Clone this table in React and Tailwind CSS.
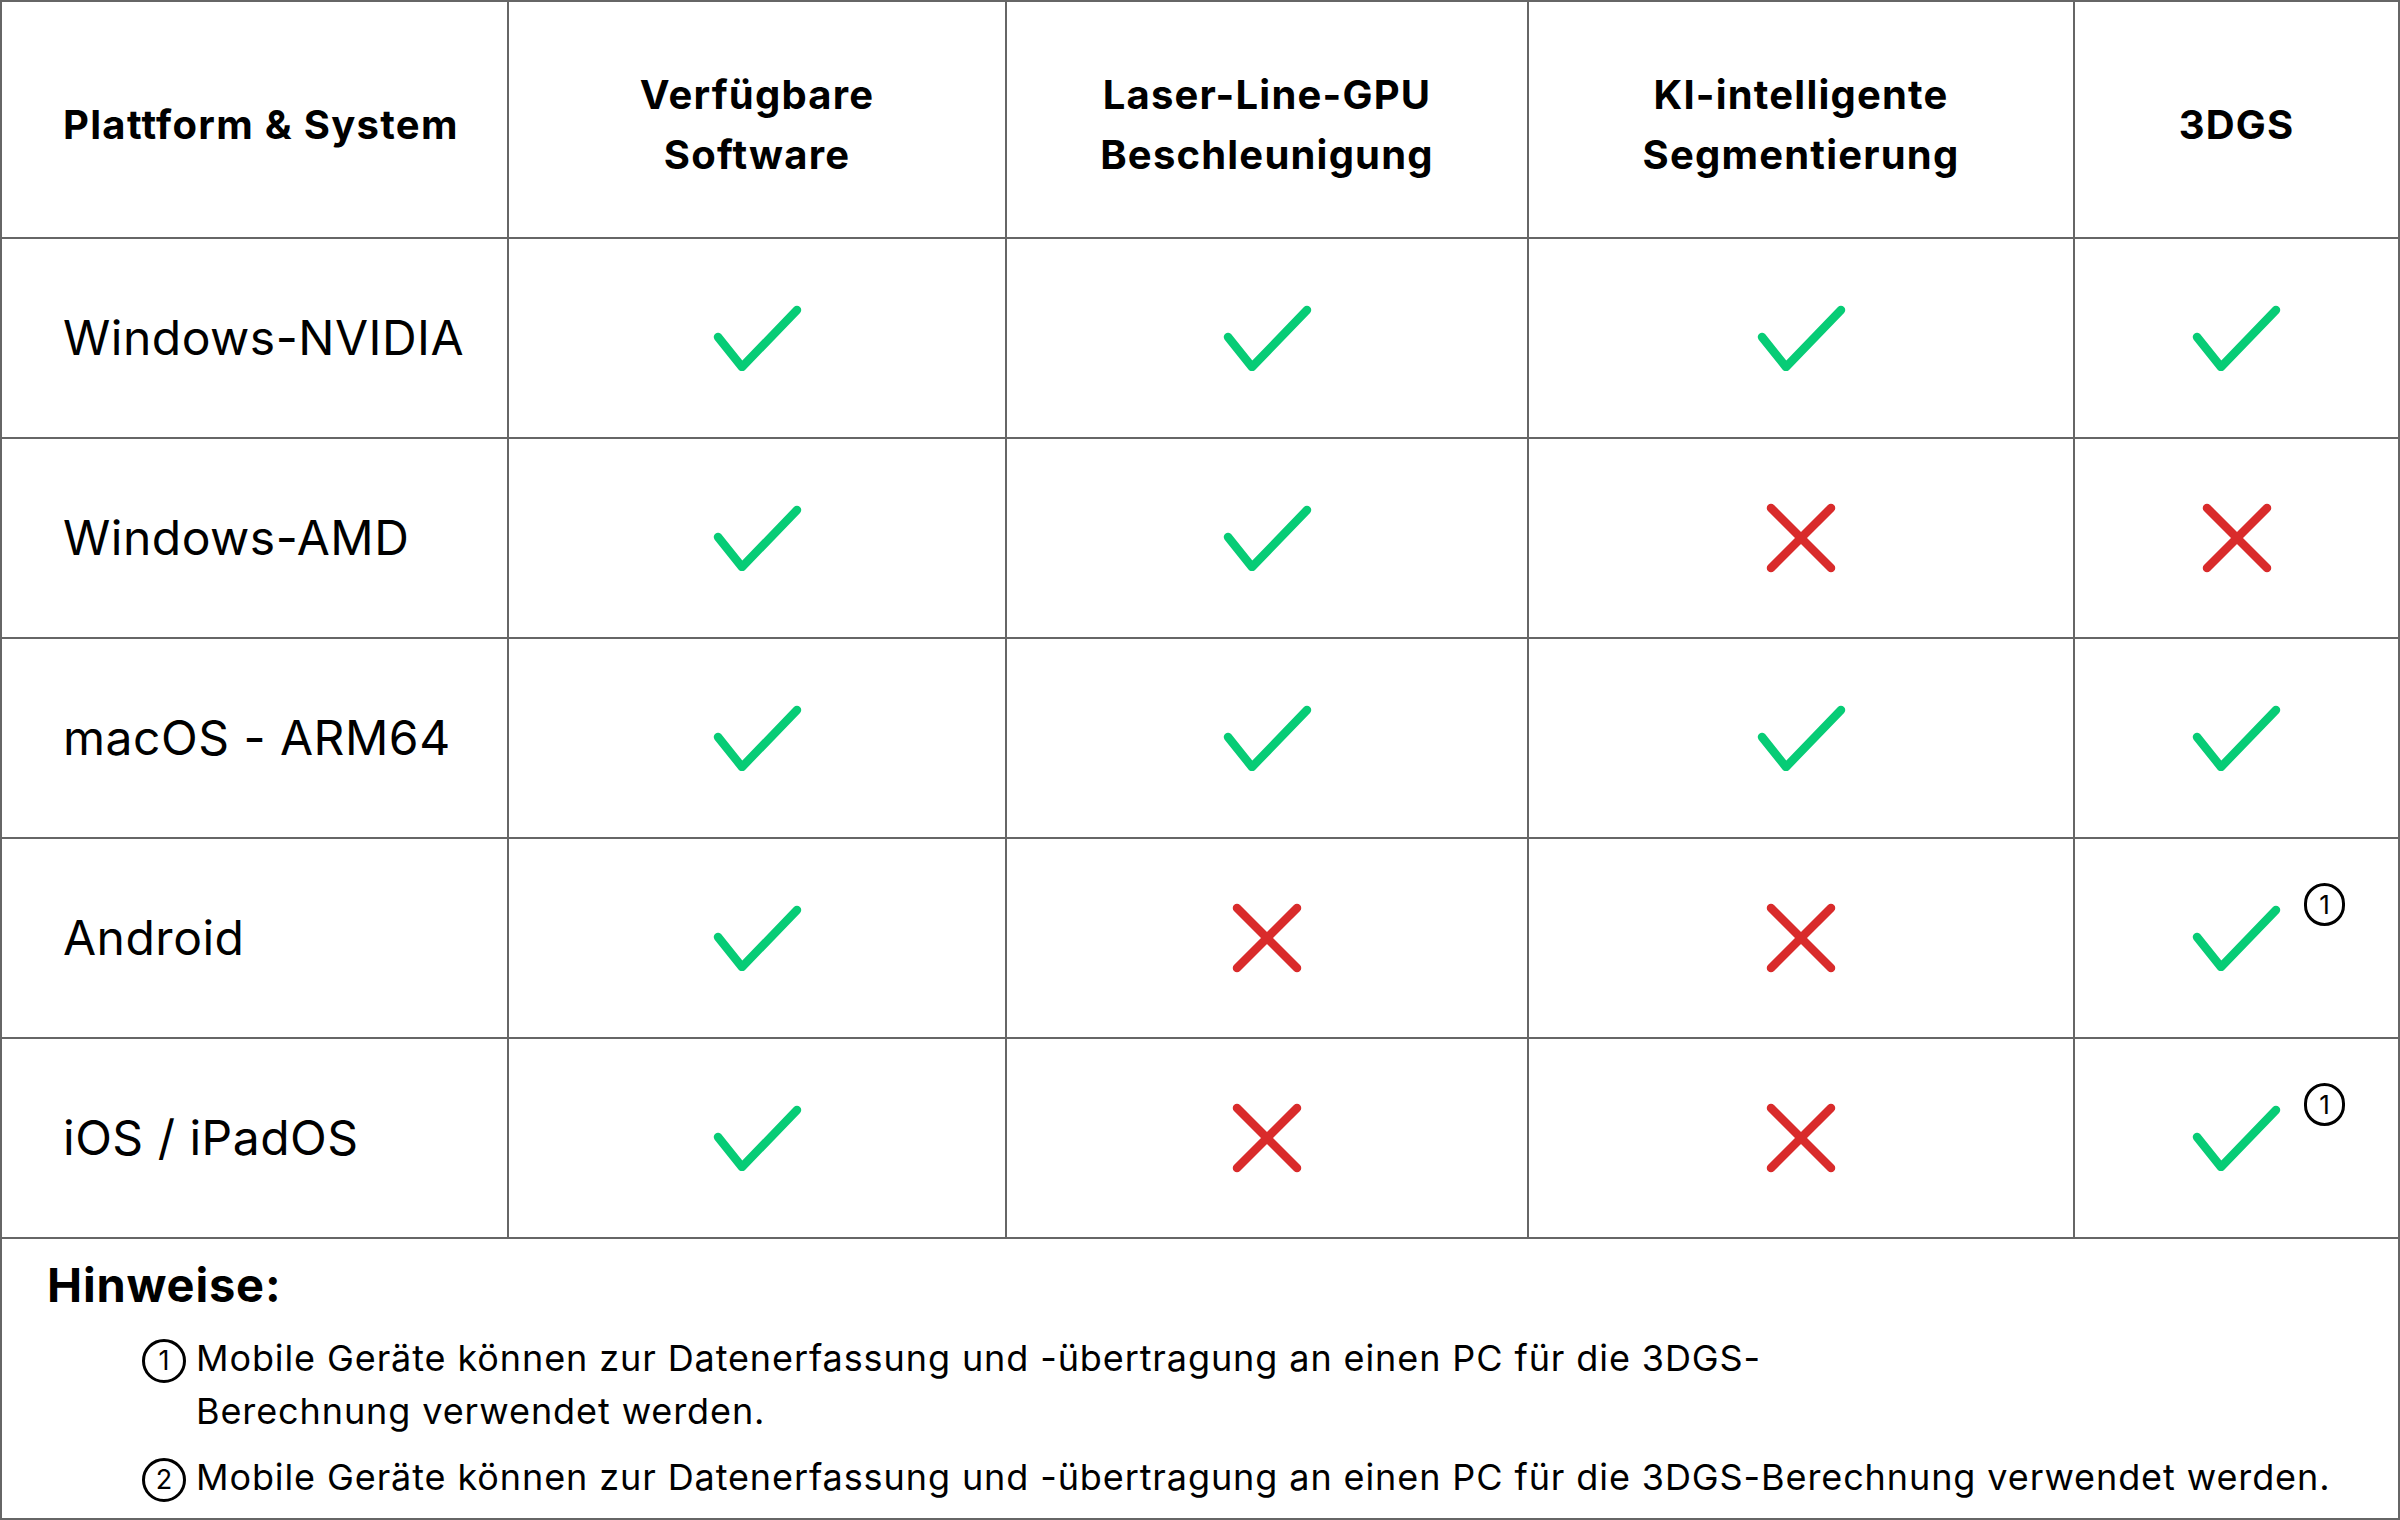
import React from "react";

const Check = ({ badge }) => (
  <div className="relative w-[89px] h-[66px]">
    <svg width="89" height="66" viewBox="0 0 89 66" fill="none">
      <path d="M5 32 L29 62 L84 5" stroke="#07cc76" strokeWidth="8.5" strokeLinecap="round" strokeLinejoin="round" />
    </svg>
    {badge && (
      <span className="absolute left-[112px] top-[-22px] w-[41px] h-[43px] rounded-full border-[3px] border-black flex items-center justify-center text-[26px] leading-none text-black">
        1
      </span>
    )}
  </div>
);

const Cross = () => (
  <svg width="70" height="70" viewBox="0 0 70 70" fill="none">
    <path d="M5 5 L65 65 M65 5 L5 65" stroke="#d92b2b" strokeWidth="8.5" strokeLinecap="round" />
  </svg>
);

const rows = [
  { name: "Windows-NVIDIA", v: ["c", "c", "c", "c"] },
  { name: "Windows-AMD", v: ["c", "c", "x", "x"] },
  { name: "macOS - ARM64", v: ["c", "c", "c", "c"] },
  { name: "Android", v: ["c", "x", "x", "cb"] },
  { name: "iOS / iPadOS", v: ["c", "x", "x", "cb"] },
];

const Circ = ({ n }) => (
  <span className="inline-flex w-[44px] h-[44px] rounded-full border-[3px] border-black items-center justify-center text-[27px] leading-none tracking-normal shrink-0">
    {n}
  </span>
);

const headCls =
  "bg-white flex items-center justify-center text-center text-[40px] font-bold leading-[60px] tracking-[1.2px] pt-[10px]";

export default function App() {
  return (
    <div className="w-[2400px] h-[1520px] bg-white font-['Inter',sans-serif] text-black">
      <div className="w-[2400px] h-[1520px] bg-[#666666] p-[2px] grid grid-cols-[505px_496px_520px_544px_1fr] grid-rows-[235px_198px_198px_198px_198px_198px_1fr] gap-[2px]">
        <div className="bg-white flex items-center pl-[61px] pt-[10px] text-[40px] font-bold tracking-[1.3px]">
          Plattform &amp; System
        </div>
        <div className={headCls}>
          Verfügbare<br />Software
        </div>
        <div className={headCls}>
          Laser-Line-GPU<br />Beschleunigung
        </div>
        <div className={headCls}>
          KI-intelligente<br />Segmentierung
        </div>
        <div className={headCls}>3DGS</div>
        {rows.map((r) => (
          <React.Fragment key={r.name}>
            <div className="bg-white flex items-center pl-[61px] text-[48px] font-normal tracking-[0.5px]">
              {r.name}
            </div>
            {r.v.map((v, i) => (
              <div key={i} className="bg-white flex items-center justify-center">
                {v === "x" ? <Cross /> : <Check badge={v === "cb"} />}
              </div>
            ))}
          </React.Fragment>
        ))}
        <div className="col-span-5 bg-white pl-[45px] pt-[18px]">
          <div className="text-[47px] font-bold leading-[56px] tracking-[0.8px]">Hinweise:</div>
          <div className="pl-[95px] mt-[19px] text-[36px] leading-[53px] tracking-[0.9px]">
            <div className="flex items-start gap-[10px]">
              <span className="mt-[-1px]"><Circ n="1" /></span>
              <span>
                Mobile Geräte können zur Datenerfassung und -übertragung an einen PC für die 3DGS-
                <br />
                Berechnung verwendet werden.
              </span>
            </div>
            <div className="flex items-start gap-[10px] mt-[13px]">
              <span className="mt-[-1px]"><Circ n="2" /></span>
              <span>
                Mobile Geräte können zur Datenerfassung und -übertragung an einen PC für die 3DGS-Berechnung verwendet werden.
              </span>
            </div>
          </div>
        </div>
      </div>
    </div>
  );
}
